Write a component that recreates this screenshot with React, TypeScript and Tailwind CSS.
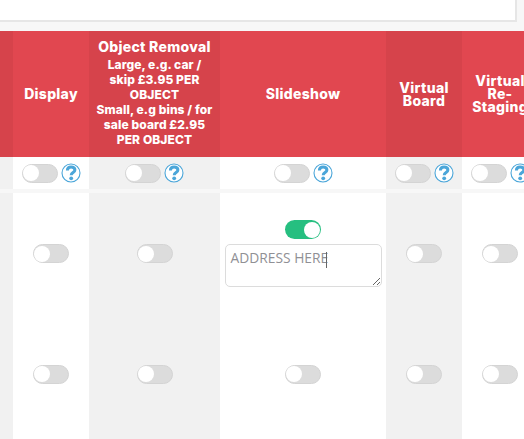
import React from "react";

const font = { fontFamily: "Inter, 'Liberation Sans', sans-serif" };

function Toggle({ on = false }: { on?: boolean }) {
  return on ? (
    <div className="flex h-[19px] w-[36px] shrink-0 items-center justify-end rounded-full bg-[#26bf80] pr-[1px]">
      <div className="h-[16px] w-[16px] rounded-full bg-white" />
    </div>
  ) : (
    <div className="flex h-[19px] w-[36px] shrink-0 items-center justify-start rounded-full border border-[#d4d4d4] bg-[#dcdcdc]">
      <div className="h-[16px] w-[16px] rounded-full bg-white" />
    </div>
  );
}

function Help() {
  return (
    <svg width="20" height="20" viewBox="0 0 20 20" className="shrink-0">
      <circle cx="10" cy="10" r="9" fill="#fff" stroke="#4ba6d9" strokeWidth="1.1" />
      <path d="M6.4 7.6C6.4 5.2 8.1 4 10.1 4C12.3 4 13.9 5.2 13.9 7.1C13.9 9.6 10.2 9.6 10.2 12.2" fill="none" stroke="#4ba6d9" strokeWidth="3" />
      <circle cx="10.2" cy="15.3" r="1.9" fill="#4ba6d9" />
    </svg>
  );
}

type Col = { w: string; shade: boolean; head: React.ReactNode; helper: boolean };

const headBig = "text-[14px] font-extrabold tracking-[0.3px] text-white text-center";

const cols: Col[] = [
  { w: "w-[13px]", shade: true, head: null, helper: false },
  { w: "w-[76px]", shade: false, head: <div className={headBig}>Display</div>, helper: true },
  {
    w: "w-[131px]",
    shade: true,
    helper: true,
    head: (
      <div className="text-center text-white">
        <div className="whitespace-nowrap text-[14px] font-extrabold leading-[15px] tracking-[0.3px]">Object Removal</div>
        <div className="mt-[3px] whitespace-nowrap text-[12px] font-extrabold leading-[15px] tracking-[0.1px]">
          Large, e.g. car /<br />skip £3.95 PER<br />OBJECT<br />Small, e.g bins / for<br />sale board £2.95<br />PER OBJECT
        </div>
      </div>
    ),
  },
  { w: "w-[166px]", shade: false, head: <div className={headBig}>Slideshow</div>, helper: true },
  {
    w: "w-[76px]",
    shade: true,
    helper: true,
    head: <div className={`${headBig} pt-[2px] leading-[13px]`}>Virtual<br />Board</div>,
  },
  {
    w: "w-[76px]",
    shade: false,
    helper: true,
    head: <div className={`${headBig} leading-[13px]`}>Virtual<br />Re-<br />Staging</div>,
  },
];

export default function App() {
  return (
    <div className="h-[439px] w-[524px] overflow-hidden bg-[#f7f7f7]" style={font}>
      <div className="h-[22px] w-[517px] border-r-2 border-b-2 border-[#e6e6e6] bg-white" />
      <div className="mt-[9px] flex w-[538px]">
        {cols.map((c, i) => (
          <div key={i} className={`flex shrink-0 flex-col ${c.w}`}>
            <div className={`flex h-[126px] items-center justify-center px-1 pb-[2px] ${c.shade ? "bg-[#d6434b]" : "bg-[#e14750]"}`}>
              {c.head}
            </div>
            <div className={`flex h-[32px] items-center justify-center gap-[3px] ${c.shade ? "bg-[#f1f1f1]" : "bg-white"}`}>
              {c.helper && (
                <>
                  <Toggle />
                  <Help />
                </>
              )}
            </div>
            <div className="h-[4px]" />
            <div className={`flex h-[121px] flex-col items-center justify-center ${c.shade ? "bg-[#f1f1f1]" : "bg-white"}`}>
              {c.helper && i !== 3 && <Toggle />}
              {i === 3 && (
                <div className="flex flex-col items-center gap-[5px]">
                  <Toggle on />
                  <div className="relative flex">
                    <textarea
                      readOnly
                      defaultValue="ADDRESS HERE"
                      className="block h-[43px] w-[157px] rounded-[5px] border border-[#dcdcdc] bg-white px-[5px] py-[3px] text-[13.8px] leading-[20px] text-[#909095] outline-none"
                      style={{ fontFamily: "'Open Sans', sans-serif" }}
                    />
                    <div className="absolute left-[101px] top-[8px] h-[16px] w-px bg-[#666]" />
                  </div>
                </div>
              )}
            </div>
            <div className={`flex h-[120px] items-center justify-center ${c.shade ? "bg-[#f1f1f1]" : "bg-white"}`}>
              {c.helper && <Toggle />}
            </div>
            <div className={`h-[10px] ${c.shade ? "bg-[#f1f1f1]" : "bg-white"}`} />
          </div>
        ))}
      </div>
    </div>
  );
}
